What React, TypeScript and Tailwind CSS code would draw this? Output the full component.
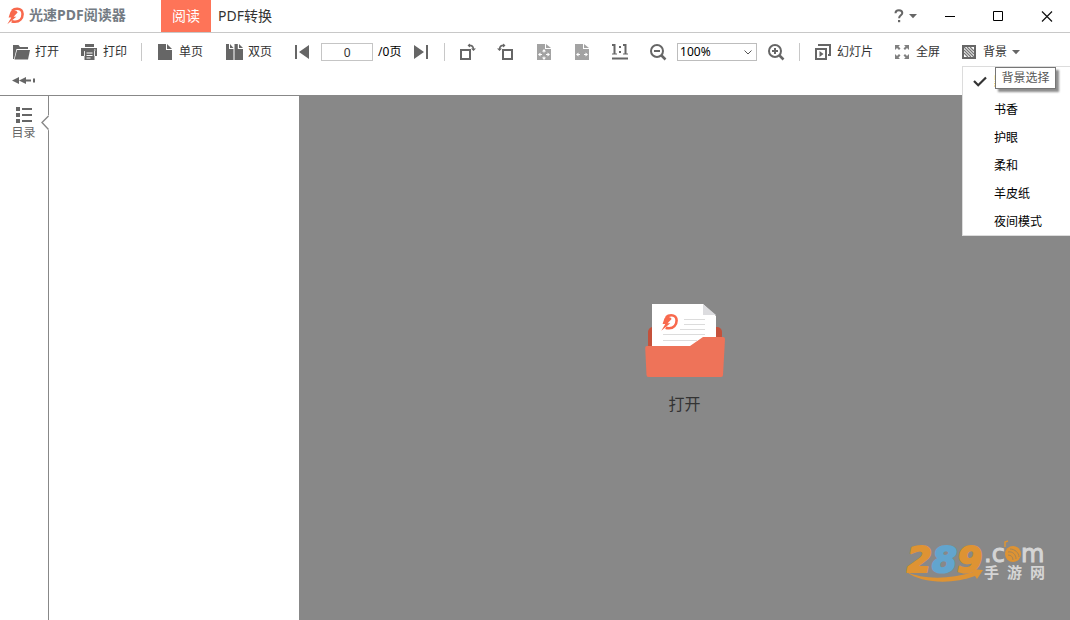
import { useState } from "react";
import type { ReactNode } from "react";

const backgrounds = ["默认", "书香", "护眼", "柔和", "羊皮纸", "夜间模式"];

function Icon({ children, size = 18 }: { children: ReactNode; size?: number }) {
  return (
    <svg width={size} height={size} viewBox="0 0 18 18" fill="#666" className="shrink-0" aria-hidden="true">
      {children}
    </svg>
  );
}

function BrandShape() {
  return (
    <>
      <path
        d="M5.200 3.600C6.600 2.200 8.200 1.700 10.200 1.700c3.400 0 5.400 2.300 5.400 5.400 0 4.600-3.200 7.700-7.600 7.700-1.200 0-2.400-.1-3.300-.5"
        fill="none"
        stroke="#f8694d"
        strokeWidth="2.600"
      />
      <path d="M9.800 4.200 5.200 2.600 3.400 5 1.600 10.400h2.700L.3 17.200l9-7.400H6.600l4-4.200Z" fill="#f8694d" />
    </>
  );
}

function Separator() {
  return <div className="mx-3.5 h-[18px] w-px shrink-0 bg-[#c8c8c8]" />;
}

function Caret() {
  return (
    <svg width="8" height="5" viewBox="0 0 8 5" aria-hidden="true">
      <path d="M0 0h8L4 4.300Z" fill="#666" />
    </svg>
  );
}

function ToolButton({ icon, label, children }: { icon: ReactNode; label: string; children?: ReactNode }) {
  return (
    <button type="button" className="flex shrink-0 items-center gap-[5px] whitespace-nowrap">
      {icon}
      <span>{label}</span>
      {children}
    </button>
  );
}

function IconButton({ label, children }: { label: string; children: ReactNode }) {
  return (
    <button type="button" aria-label={label} className="shrink-0">
      <Icon>{children}</Icon>
    </button>
  );
}

function TitleBar() {
  return (
    <header className="flex h-[33px] items-stretch border-b border-[#c8c8c8]">
      <div className="flex w-[161px] items-center gap-1 pl-[7px]">
        <svg viewBox="0 0 18 18" className="h-[18px] w-[18px]" aria-hidden="true">
          <BrandShape />
        </svg>
        <h1 className="pb-0.5 text-sm font-bold text-[#737b83]">光速PDF阅读器</h1>
      </div>
      <nav className="flex text-sm">
        <button type="button" className="w-[50px] bg-[#fe7458] text-white">阅读</button>
        <button type="button" className="px-[7px] text-[#333]">PDF转换</button>
      </nav>
      <div className="ml-auto flex items-center pr-4">
        <button type="button" aria-label="帮助" className="mr-[27px] flex items-center gap-1">
          <svg width="12" height="14" viewBox="0 0 12 14" fill="none" aria-hidden="true">
            <path d="M2.500 4.300C2.500 2.200 4 1.200 5.900 1.200s3.400 1 3.400 2.800c0 2.200-3.200 2.500-3.200 5.200" stroke="#666" strokeWidth="2" />
            <path d="M5 11h2.200v2.200H5z" fill="#666" />
          </svg>
          <Caret />
        </button>
        <button type="button" aria-label="最小化" className="mr-9">
          <svg width="12" height="12" viewBox="0 0 12 12" aria-hidden="true">
            <path d="M1 6h10v1H1z" fill="#000" />
          </svg>
        </button>
        <button type="button" aria-label="最大化" className="mr-9">
          <svg width="12" height="12" viewBox="0 0 12 12" aria-hidden="true">
            <path d="M1.500 1.500h9v9h-9z" fill="none" stroke="#000" />
          </svg>
        </button>
        <button type="button" aria-label="关闭">
          <svg width="14" height="12" viewBox="0 0 14 12" aria-hidden="true">
            <path d="m2 1.500 10 10m0-10-10 10" fill="none" stroke="#111" strokeWidth="1.200" />
          </svg>
        </button>
      </div>
    </header>
  );
}

function Toolbar() {
  return (
    <div className="relative border-b border-[#888] text-xs text-[#333]">
      <div className="flex h-[38px] items-center pl-3">
        <div className="flex gap-[21px]">
          <ToolButton
            label="打开"
            icon={
              <Icon>
                <path d="M1 16V2h5.500l1.500 2h8v2H4.500L2 16Z" />
                <path d="M5 7h13l-2 9.500H2.500Z" />
              </Icon>
            }
          />
          <ToolButton
            label="打印"
            icon={
              <Icon>
                <path d="M5 1h9v3H5zM1 5h16v8h-2.500V9h-10v4H1Z" />
                <path fillRule="evenodd" d="M4.500 8h10v9h-10Zm2 1.500v1h6v-1Zm0 2.500v1h6v-1Zm0 2.500v1h4v-1Z" />
                <path d="M4 8h.8v5H4zM14.200 8h.8v5h-.8zM14 6.500h1.500v1H14z" fill="#fff" />
              </Icon>
            }
          />
        </div>
        <Separator />
        <div className="flex gap-[22px]">
          <ToolButton
            label="单页"
            icon={
              <Icon>
                <path d="M2 1h8v6h6v10H2Z" />
                <path d="M11 1v5h5Z" />
              </Icon>
            }
          />
          <ToolButton
            label="双页"
            icon={
              <Icon>
                <path d="M1 1h3v5h4.500v11H1ZM5 1v4h3.500ZM9.500 1h3.300v5H18v11H9.500ZM14 1v4h4Z" />
              </Icon>
            }
          />
        </div>
        <div className="ml-[21px] flex items-center">
          <IconButton label="上一页">
            <path d="M2 2h2v14H2zM16 2v14L6 9Z" />
          </IconButton>
          <input
            aria-label="页码"
            defaultValue="0"
            className="mr-[5px] ml-2.5 h-[18px] w-[52px] border border-[#c5c5c5] bg-white text-center text-xs outline-none"
          />
          <span className="mr-2.5 w-6 whitespace-nowrap text-black">/0页</span>
          <IconButton label="下一页">
            <path d="M2 2v14l10-7ZM14 2h2v14h-2z" />
          </IconButton>
        </div>
        <Separator />
        <div className="flex items-center gap-5">
          <IconButton label="向右旋转">
            <path d="M1 6h11v11H1Zm2 2v7h7V8Z" fillRule="evenodd" />
            <path d="M9.500 2.500c3-.6 4.700.7 5 3.700" fill="none" stroke="#666" strokeWidth="1.600" />
            <path d="M12 5.500h5L14.500 8ZM11 .5v4l-2.500-2Z" />
          </IconButton>
          <IconButton label="向左旋转">
            <path d="M5 6h11v11H5Zm2 2v7h7V8Z" fillRule="evenodd" />
            <path d="M7.500 2.500c-3-.6-4.700.7-5 3.700" fill="none" stroke="#666" strokeWidth="1.600" />
            <path d="M0 5.500h5L2.500 8ZM6 .5v4l2.500-2Z" />
          </IconButton>
          <IconButton label="适合页面">
            <path d="M2 1h8v5h6v11H2ZM11 1v4h5Z" fill="#a3a3a3" />
            <path d="m9 6 2 2.500H9.500v1h-1v-1H7ZM9 17l2-2.500H9.500v-1h-1v1H7ZM3 11.500 5.500 9.500V11H7v1H5.500v1.500Zm12 0-2.500-2V11H11v1h1.500v1.500Z" fill="#fff" />
          </IconButton>
          <IconButton label="适合宽度">
            <path d="M2 1h8v5h6v11H2ZM11 1v4h5Z" fill="#a3a3a3" />
            <path d="m3 11.500 2.500-2V11H7v1H5.500v1.500Zm12 0-2.500-2V11H11v1h1.500v1.500Z" fill="#fff" />
          </IconButton>
          <IconButton label="实际大小">
            <path d="M1 1h3.500v9.500H6v1H1v-1h1.500V3H1ZM12 1h3.500v9.500H17v1h-5v-1h1.500V3H12ZM8 3h2v2H8zM8 8h2v2H8zM1 14.500h16v2H1z" />
          </IconButton>
          <IconButton label="缩小">
            <circle cx="8" cy="8" r="6" fill="none" stroke="#666" strokeWidth="2" />
            <path d="M5 7h6v2H5z" />
            <path d="m12.500 12.500 4 4" stroke="#666" strokeWidth="2.500" />
          </IconButton>
        </div>
        <div className="mx-2.5 flex h-[18px] w-20 shrink-0 items-center border border-[#bdbdbd] pr-1">
          <select aria-label="缩放比例" className="h-4 min-w-0 flex-1 appearance-none bg-white pl-0.5 text-xs text-black outline-none">
            <option>100%</option>
          </select>
          <svg width="8" height="5" viewBox="0 0 8 5" className="pointer-events-none" aria-hidden="true">
            <path d="m.5.500 3.500 3.500L7.500.5" fill="none" stroke="#555" />
          </svg>
        </div>
        <IconButton label="放大">
          <circle cx="8" cy="8" r="6" fill="none" stroke="#666" strokeWidth="2" />
          <path d="M5 7h2V5h2v2h2v2H9v2H7V9H5z" />
          <path d="m12.500 12.500 4 4" stroke="#666" strokeWidth="2.500" />
        </IconButton>
        <Separator />
        <div className="flex gap-5">
          <ToolButton
            label="幻灯片"
            icon={
              <Icon>
                <path fillRule="evenodd" d="M1 5h12v12H1Zm2 2v8h8V7Z" />
                <path d="M4 3V1h13v12h-3v-2h1V3ZM5.500 8v6L9.500 11Z" />
              </Icon>
            }
          />
          <ToolButton
            label="全屏"
            icon={
              <Icon>
                <path d="M2 2h5L5.500 3.500 7.500 5.500 6 7 4 5 2 7ZM16 2v5l-2-2-2 2-1.500-1.500 2-2L11 2ZM2 16v-5l2 2 2-2 1.500 1.500-2 2L7 16ZM16 16h-5l1.500-1.500-2-2L12 11l2 2 2-2Z" fill="#808080" />
              </Icon>
            }
          />
          <ToolButton
            label="背景"
            icon={
              <Icon>
                <path fillRule="evenodd" d="M2 2h14v14H2Zm2 2v10h10V4Z" />
                <path d="m4 4 10 10M4 7l7 7M4 10l4 4M7 4l7 7M10 4l4 4" stroke="#777" strokeWidth="1.300" />
              </Icon>
            }
          >
            <Caret />
          </ToolButton>
        </div>
      </div>
      <div className="flex h-6 items-start pt-1 pl-3">
        <button type="button" aria-label="收起工具栏">
          <svg width="24" height="10" viewBox="0 0 24 10" fill="#666" aria-hidden="true">
            <path d="m0 5.500 7-3.500v7ZM7 5.500 14 2v2.500h5v2h-5V9ZM21 3.500h2v4h-2z" />
          </svg>
        </button>
      </div>
      <BackgroundMenu />
    </div>
  );
}

function BackgroundMenu() {
  const [selected, setSelected] = useState("默认");
  return (
    <div className="absolute top-[33px] right-0 z-10 w-[108px] border border-r-0 border-[#dcdcdc] bg-white">
      <ul className="text-black">
        {backgrounds.map((name) => (
          <li key={name}>
            <button
              type="button"
              onClick={() => setSelected(name)}
              className={`flex h-7 w-full items-center pt-0.5 pl-[10px] ${name === selected ? "text-[#d08a2c]" : ""}`}
            >
              <span className="w-[21px]">
                {name === selected && (
                  <svg width="14" height="12" viewBox="0 0 14 12" aria-hidden="true">
                    <path d="m1 5 4.200 4.200L13 1.500" fill="none" stroke="#333" strokeWidth="2.200" />
                  </svg>
                )}
              </span>
              {name}
            </button>
          </li>
        ))}
      </ul>
      <div
        role="tooltip"
        className="absolute top-0 left-8 flex h-[22px] w-[61px] items-center justify-center border border-[#767676] bg-white text-[#575757] shadow-[3px_3px_2px_rgba(0,0,0,0.45)]"
      >
        背景选择
      </div>
    </div>
  );
}

function Sidebar() {
  return (
    <aside className="relative w-[49px] border-r border-[#888] pt-[11px] text-xs text-[#666]">
      <button type="button" className="flex w-[47px] flex-col items-center gap-0.5">
        <svg width="16" height="16" viewBox="0 0 16 16" fill="#666" aria-hidden="true">
          <path d="M0 0h4v4H0zM6 1h10v2H6zM0 6h4v4H0zM6 7h10v2H6zM0 12h4v4H0zM6 13h10v2H6z" />
        </svg>
        <span>目录</span>
      </button>
      <button type="button" aria-label="收起目录" className="absolute top-[19px] -right-px">
        <svg width="8" height="16" viewBox="0 0 8 16" aria-hidden="true">
          <path d="M8 0 .8 6.500v2L8 15.500Z" fill="#fff" />
          <path d="M7.500 1 1 7.500 7.500 14.500" fill="none" stroke="#888" strokeWidth="1.400" />
        </svg>
      </button>
    </aside>
  );
}

function FolderArt() {
  return (
    <svg width="80" height="74" viewBox="0 0 80 74" aria-hidden="true">
      <rect x="3" y="23" width="74" height="40" rx="5" fill="#c4513b" />
      <path d="M7 0h51l13 12v35H7Z" fill="#fff" />
      <path d="M58 0v11h13Z" fill="#dcdcdf" />
      <path d="M39 15.500h21M39 20.500h21M35 25.500h25M18 30.500h42M18 36.500h34" stroke="#dcdcdc" />
      <g transform="translate(16 9.500)">
        <BrandShape />
      </g>
      <path d="M2 42h43l13-9h20q2 0 2 2l-2 36q0 2-2 2H3.500q-2 0-2-2L.2 44q0-2 1.800-2Z" fill="#ee7359" />
    </svg>
  );
}

function SiteMark() {
  return (
    <div className="absolute right-6 bottom-9 opacity-90">
      <svg width="140" height="44" viewBox="0 0 140 44" role="img" aria-label="289.com 手游网">
        <g className="font-['DejaVu_Sans',sans-serif] font-bold italic" fontSize="36" strokeWidth="2" strokeLinejoin="round">
          <text x="1" y="32" fill="#e8952a" stroke="#e8952a">
            2<tspan fill="#5ea9d6" stroke="#5ea9d6">8</tspan>9
          </text>
        </g>
        <path d="M1 32c14 7 42 8 66 0l-2-3 12 1-6 9-2-3C46 45 14 43 1 32Z" fill="#e8952a" />
        <g className="font-['DejaVu_Sans',sans-serif]" fontSize="24" fill="#dedede" stroke="#dedede">
          <text x="78" y="22">.c</text>
          <text x="115" y="22">m</text>
        </g>
        <circle cx="107" cy="14" r="8" fill="#e8952a" />
        <path d="M102 12c5-1 8 3 8 7M102 15c3 0 5 2 5 5M104 9c5 0 9 4 9 8" fill="none" stroke="#a98550" />
        <path d="M99 7V2l3-1" fill="none" stroke="#e8952a" strokeWidth="1.500" />
        <g className="font-['Noto_Sans_CJK_SC',sans-serif] font-bold" fontSize="15" fill="#dedede">
          <text x="78" y="38">手</text>
          <text x="101" y="38">游</text>
          <text x="124" y="38">网</text>
        </g>
      </svg>
    </div>
  );
}

export default function App() {
  return (
    <div className="flex min-h-screen flex-col overflow-hidden bg-white font-['Noto_Sans','Noto_Sans_CJK_SC',sans-serif]">
      <TitleBar />
      <Toolbar />
      <div className="flex flex-1">
        <Sidebar />
        <section className="w-[250px] shrink-0 bg-white" aria-label="目录内容" />
        <main className="relative flex flex-1 items-center justify-center bg-[#888] pt-1">
          <button type="button" className="flex flex-col items-center gap-3.5 text-base text-[#333]">
            <FolderArt />
            <span>打开</span>
          </button>
          <SiteMark />
        </main>
      </div>
    </div>
  );
}
